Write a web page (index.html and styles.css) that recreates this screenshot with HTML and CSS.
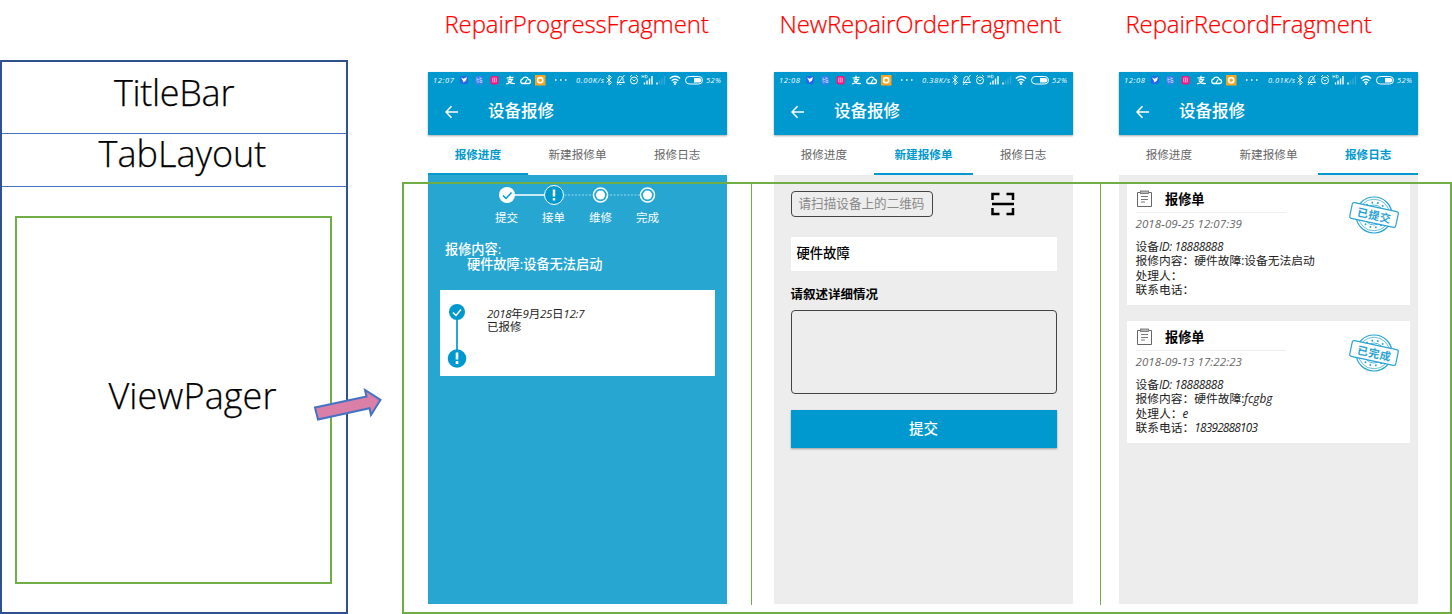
FILE: index.html
```
<!DOCTYPE html>
<html lang="zh-CN">
<head>
<meta charset="utf-8">
<title>Repair fragments</title>
<link rel="stylesheet" href="styles.css">
</head>
<body>
<svg class="defs" width="0" height="0">
  <defs>
    <symbol id="status" viewBox="0 0 299 16">
      <rect x="32" y="4" width="8" height="8" rx="2" fill="#2467e8"/>
      <path d="M33 5.500l2.500 1.200L39 5l-1 3.500-2.500 2-.7-2z" fill="#fff"/>
      <rect x="47.500" y="4" width="7.500" height="8.500" rx="1.500" fill="#3e7cf0"/>
      <path d="M49 5.500v4M49 7.500h2M52 5v3M52 6.500h2M52 8.500h2v2h-2zM49 10.500l2-1" stroke="#b8d3ff" stroke-width=".8" fill="none"/>
      <rect x="62.500" y="4" width="8" height="8.500" rx="2" fill="#f5167f"/>
      <path d="M64.500 6h4v4h-4zM64.500 8h4M66.500 6v4" stroke="#ff9ccd" stroke-width=".8" fill="none"/>
      <path d="M78.500 6l7-.7M82 3.800v3.500M79.500 8l5-.5q-2 3.500-6.500 4.500M80 9q2.500 3 7 2.500" stroke="#fff" stroke-width="1.200" fill="none"/>
      <path d="M94.500 11.500a2.300 2.300 0 0 1 0-4.500 3.200 3.200 0 0 1 6 .5 2 2 0 0 1 0 4zM97 11l2-3.500" stroke="#fff" stroke-width="1.300" fill="none"/>
      <rect x="107" y="3" width="10.500" height="10.500" fill="#faa51b"/>
      <circle cx="112.200" cy="8.200" r="2.600" fill="none" stroke="#fff" stroke-width="1.600"/>
      <path d="M127 8h1.500M132 8h1.500M137 8h1.500" stroke="#fff" stroke-width="1.300"/>
      <path d="M178.500 5.500l5 5-2.500 2.500v-10l2.500 2.500-5 5" stroke="#fff" fill="none" stroke-width=".9"/>
      <path d="M189 10.500h7.500l-1.500-2V6.500q-.5-2-2.500-2t-2.500 2v2zM191.500 12.500h2M189 13l7.500-10" stroke="#fff" fill="none" stroke-width=".9"/>
      <circle cx="206" cy="8.500" r="3.500" stroke="#fff" fill="none"/>
      <path d="M202 5l2-2M210 5l-2-2M204.500 7.500l1.500 1.500 1.500-1.500" stroke="#fff" fill="none" stroke-width=".9"/>
      <path d="M214 3v3M216 3v3M214 4.500h2M217.500 3v3q2 0 2-1.500t-2-1.500" stroke="#fff" stroke-width=".6" fill="none"/>
      <path d="M216.500 12.500V10.500M219 12.500V8.500M221.500 12.500V6.500M224 12.500V4" stroke="#fff" stroke-width="1.400"/>
      <path d="M229 12.500v-2" stroke="#fff" stroke-width="1.500"/>
      <path d="M231.500 12.500v-4M234 12.500v-6M236.500 12.500V4" stroke="#35a9d6" stroke-width="1.400"/>
      <path d="M241.800 6.500q5.200-4.500 10.400 0M243.600 8.700q3.400-3 6.800 0M245.200 10.700q1.800-1.500 3.600 0" stroke="#fff" stroke-width="1.300" fill="none"/>
      <circle cx="247" cy="12" r="1" fill="#fff"/>
      <rect x="257.500" y="4.500" width="17" height="7.500" rx="3.700" stroke="#fff" fill="none"/>
      <path d="M266 6h5.500a2.300 2.300 0 0 1 0 4.500H266z" fill="#fff"/>
    </symbol>
    <symbol id="back" viewBox="0 0 14 14"><path d="M13 7H1.500M6.500 1.200L1 7l5.500 5.800" stroke="#fff" stroke-width="1.600" fill="none"/></symbol>
    <symbol id="sheet" viewBox="0 0 17 18"><path d="M4 2.500H1.500v14h14v-14H13" stroke="#666" fill="none"/><rect x="4.500" y="1" width="8" height="2.500" fill="#bbb" stroke="#666" stroke-width=".8"/><path d="M5 6.500h7M5 9.500h7M5 12h4" stroke="#666" stroke-width=".9"/></symbol>
    <symbol id="stamp" viewBox="0 0 52 44">
      <g fill="none" stroke="#2aa4d2">
        <circle cx="26" cy="22" r="18" stroke-width="1.200"/>
        <circle cx="26" cy="22" r="15.800" stroke-width=".7"/>
        <circle cx="26" cy="22" r="12.500" stroke-width="1.800" stroke-dasharray="1.600 4"/>
        <circle cx="26" cy="22" r="10" stroke-width=".8"/>
      </g>
      <rect x="2.500" y="14" width="47" height="16" rx="2" fill="#fff" stroke="#2aa4d2" stroke-width="1.200" transform="rotate(12 26 22)"/>
    </symbol>
  </defs>
</svg>

<main class="page">
  <section class="structure">
    <div class="slot slot-title"><span>TitleBar</span></div>
    <div class="slot slot-tabs"><span>TabLayout</span></div>
    <div class="slot-pager"><div class="pager"><span>ViewPager</span></div></div>
  </section>

  <section class="fragment fragment-progress">
    <h2 class="name">RepairProgressFragment</h2>
    <div class="phone">
      <header class="appbar">
        <svg class="statusbar" width="299" height="16"><use href="#status"/><text x="5" y="10.500" textLength="21">12:07</text><text x="148" y="10.500" textLength="28">0.00K/s</text><text x="278" y="10.500" textLength="15">52%</text></svg>
        <div class="titlebar"><svg width="14" height="14"><use href="#back"/></svg><span>设备报修</span></div>
      </header>
      <nav class="tabs"><span class="tab active">报修进度</span><span class="tab">新建报修单</span><span class="tab">报修日志</span></nav>
      <div class="body progress">
        <svg class="steps" width="160" height="22">
          <path d="M10 10h47" stroke="#fff" stroke-width="1.600"/>
          <path d="M57 10h93" stroke="#9ad8ec" stroke-dasharray="2 1.500"/>
          <circle cx="10" cy="10" r="8" fill="#fff"/><path d="M6 10.500l3 3 5.500-6" stroke="#0099cf" stroke-width="1.500" fill="none"/>
          <circle cx="57" cy="10" r="9.500" fill="#0099cf" stroke="#fff"/><path d="M57 4.500v7M57 13v2.500" stroke="#fff" stroke-width="2.500"/>
          <circle cx="103.500" cy="10" r="7" fill="#27a6d2" stroke="#fff" stroke-width="1.500"/><circle cx="103.500" cy="10" r="4.500" fill="#fff"/>
          <circle cx="150.500" cy="10" r="7" fill="#27a6d2" stroke="#fff" stroke-width="1.500"/><circle cx="150.500" cy="10" r="4.500" fill="#fff"/>
        </svg>
        <div class="step-names"><span>提交</span><span>接单</span><span>维修</span><span>完成</span></div>
        <div class="content-text"><p>报修内容:</p><p class="indent">硬件故障:设备无法启动</p></div>
        <div class="timeline">
          <svg width="20" height="68">
            <path d="M10 10v48" stroke="#0099cf" stroke-width="1.700"/>
            <circle cx="10" cy="10" r="8" fill="#0099cf"/><path d="M6 10.500l3 3 5-6" stroke="#fff" stroke-width="1.500" fill="none"/>
            <circle cx="10" cy="56.500" r="9.300" fill="#0099cf"/><path d="M10 50.500v7M10 59v3" stroke="#fff" stroke-width="2.600"/>
          </svg>
          <div><p class="stamp-time"><i>2018</i>年<i>9</i>月<i>25</i>日<i>12:7</i></p><p>已报修</p></div>
        </div>
      </div>
    </div>
  </section>

  <section class="fragment fragment-order">
    <h2 class="name">NewRepairOrderFragment</h2>
    <div class="phone">
      <header class="appbar">
        <svg class="statusbar" width="299" height="16"><use href="#status"/><text x="5" y="10.500" textLength="21">12:08</text><text x="148" y="10.500" textLength="28">0.38K/s</text><text x="278" y="10.500" textLength="15">52%</text></svg>
        <div class="titlebar"><svg width="14" height="14"><use href="#back"/></svg><span>设备报修</span></div>
      </header>
      <nav class="tabs"><span class="tab">报修进度</span><span class="tab active">新建报修单</span><span class="tab">报修日志</span></nav>
      <div class="body order">
        <div class="scan-row">
          <div class="scan-input">请扫描设备上的二维码</div>
          <svg width="24" height="24"><path d="M1.500 8V2H8.500M15.500 2H22V8M1.500 16v6H8.500M15.500 22H22V16M1 12h22" fill="none" stroke="#000" stroke-width="2.500"/></svg>
        </div>
        <div class="kind">硬件故障</div>
        <div class="label">请叙述详细情况</div>
        <div class="details"></div>
        <div class="submit">提交</div>
      </div>
    </div>
  </section>

  <section class="fragment fragment-record">
    <h2 class="name">RepairRecordFragment</h2>
    <div class="phone">
      <header class="appbar">
        <svg class="statusbar" width="299" height="16"><use href="#status"/><text x="5" y="10.500" textLength="21">12:08</text><text x="149" y="10.500" textLength="27">0.01K/s</text><text x="278" y="10.500" textLength="15">52%</text></svg>
        <div class="titlebar"><svg width="14" height="14"><use href="#back"/></svg><span>设备报修</span></div>
      </header>
      <nav class="tabs"><span class="tab">报修进度</span><span class="tab">新建报修单</span><span class="tab active">报修日志</span></nav>
      <div class="body records">
        <article class="record">
          <div class="record-text">
            <div class="record-head"><svg width="17" height="18"><use href="#sheet"/></svg><span>报修单</span></div>
            <div class="date">2018-09-25 12:07:39</div>
            <p>设备<i class="device">ID: 18888888</i></p><p>报修内容：硬件故障:设备无法启动</p><p>处理人：</p><p>联系电话：</p>
          </div>
          <svg class="stamp" width="52" height="44"><use href="#stamp"/><text x="26" y="26.500" textLength="34" transform="rotate(12 26 22)">已提交</text></svg>
        </article>
        <article class="record">
          <div class="record-text">
            <div class="record-head"><svg width="17" height="18"><use href="#sheet"/></svg><span>报修单</span></div>
            <div class="date">2018-09-13 17:22:23</div>
            <p>设备<i class="device">ID: 18888888</i></p><p>报修内容：硬件故障:<i>fcgbg</i></p><p>处理人：<i>e</i></p><p>联系电话：<i class="tel">18392888103</i></p>
          </div>
          <svg class="stamp" width="52" height="44"><use href="#stamp"/><text x="26" y="26.500" textLength="34" transform="rotate(12 26 22)">已完成</text></svg>
        </article>
      </div>
    </div>
  </section>

  <div class="outline"><div></div><div></div><div></div></div>
  <svg class="arrow" width="70" height="36"><path d="M3 19.500L54.500 8.500 53 2 68.500 11.800 59 27 57.500 20.200 6 31.500z" fill="#d97fa8" stroke="#4472c4" stroke-width="2"/></svg>
</main>
</body>
</html>
```
FILE: styles.css
```
* { box-sizing: border-box; }
body { margin: 0; background: #fff; font-family: "Open Sans", "Noto Sans CJK SC", sans-serif; }
p, h2 { margin: 0; }
svg { display: block; flex: none; }
.defs { position: absolute; }
.page { position: relative; display: flex; width: 1452px; height: 614px; overflow: hidden; }

.structure { display: flex; flex-direction: column; width: 348px; height: 554px; margin-top: 60px; border: 2px solid #2f528f; font-weight: 300; font-size: 36px; line-height: 40px; color: #000; -webkit-text-stroke: .25px #000; }
.slot { display: flex; justify-content: center; border-bottom: 1px solid #4472c4; white-space: nowrap; }
.slot-title { height: 72px; padding: 11px 0 0 0; letter-spacing: -.3px; }
.slot-tabs { height: 53px; padding: 0 0 0 17px; }
.slot-pager { flex: 1; padding: 29px 14px 28px 13px; }
.pager { display: flex; align-items: center; justify-content: center; height: 100%; padding: 0 0 9px 38px; border: 2px solid #70ad47; letter-spacing: .1px; }

.fragment { width: 299px; flex: none; }
.fragment-progress { margin-left: 80px; }
.fragment-order { margin-left: 47px; }
.fragment-record { margin-left: 46px; }
.name { height: 72px; padding-top: 8px; font-size: 24px; line-height: 32px; font-weight: 300; letter-spacing: -.14px; color: #f00; white-space: nowrap; -webkit-text-stroke: .25px #f00; }
.fragment-progress .name { padding-left: 16.500px; }
.fragment-order .name { padding-left: 5.500px; }
.fragment-record .name { padding-left: 6.500px; }

.phone { display: flex; flex-direction: column; height: 532px; font-size: 12px; }
.appbar { position: relative; height: 63px; background: #0099cf; box-shadow: 0 1px 2px rgba(0,0,0,.35); }
.statusbar text { font-size: 7.500px; font-style: italic; font-weight: 500; fill: #fff; }
.titlebar { display: flex; align-items: center; height: 47px; padding: 0 0 0 17px; gap: 29px; color: #fff; }
.titlebar span { font-size: 16.500px; line-height: 24px; font-weight: 500; padding-bottom: 1px; }
.tabs { display: flex; height: 40px; background: #fff; }
.tab { flex: 1; display: flex; align-items: center; justify-content: center; border-bottom: 2px solid transparent; font-size: 11.600px; color: #666; }
.tab.active { color: #0099cf; font-weight: 700; border-color: #0099cf; }
.body { flex: 1; background: #ededed; }

.progress { background: #27a6d2; color: #fff; padding: 10px 12px 0; }
.steps { margin-left: 57px; }
.step-names { display: flex; width: 188px; margin: 2px 0 0 43px; line-height: 18px; font-size: 11.500px; }
.step-names span { width: 47px; text-align: center; }
.content-text { margin: 15px 0 0 5px; font-size: 13.200px; line-height: 15px; font-weight: 500; }
.indent { padding-left: 22px; }
.timeline { display: flex; gap: 20px; height: 86px; margin: 18px 0 0; padding: 12px 7px 0; background: #fff; color: #222; font-size: 11.500px; line-height: 13px; }
.timeline div { padding-top: 5px; }
.stamp-time { letter-spacing: -.25px; }

.order { padding: 16px 16.500px 0; }
.scan-row { display: flex; gap: 58.500px; align-items: center; height: 26px; }
.scan-input { width: 142px; height: 26px; padding-left: 7px; border: 1px solid #444; border-radius: 4px; font-size: 12.600px; line-height: 24px; color: #888; white-space: nowrap; }
.kind { height: 34px; margin-top: 20px; padding-left: 6px; background: #fff; font-size: 13.300px; line-height: 33px; font-weight: 500; }
.label { margin-top: 14px; font-size: 12.500px; line-height: 20px; font-weight: 700; }
.details { height: 84px; margin-top: 5px; border: 1px solid #444; border-radius: 4px; }
.submit { height: 38px; margin-top: 16px; background: #0099cf; color: #fff; font-size: 14.500px; line-height: 37px; font-weight: 500; text-align: center; box-shadow: 0 1px 2px rgba(0,0,0,.35); }

.records { display: flex; flex-direction: column; gap: 16px; padding: 8px 8px 0 8px; }
.record { display: flex; justify-content: space-between; height: 122px; padding: 7px 10px 0 8.500px; background: #fff; }
.record-text { width: 198px; font-size: 11.750px; line-height: 14.300px; color: #222; white-space: nowrap; }
.record-head { display: flex; align-items: center; gap: 12.500px; width: 150px; height: 23px; padding-bottom: 4px; border-bottom: 1px solid #eee; font-size: 13.200px; font-weight: 700; color: #000; }
.date { margin: 3px 0 8px; line-height: 15px; font-size: 11.500px; font-style: italic; letter-spacing: .1px; color: #666; }
.device { letter-spacing: -.4px; }
.tel { letter-spacing: -.75px; }
.stamp { margin-top: 3px; }
.stamp text { font-size: 11px; font-weight: 700; fill: #2aa4d2; text-anchor: middle; }

/* Frame drawn over all three phones, with one cell per fragment */
.outline { position: absolute; left: 402px; top: 182px; display: flex; width: 1050px; height: 432px; padding-bottom: 7px; border: 2px solid #70ad47; }
.outline div { width: 349px; border-right: 1px solid #70ad47; }
.outline div:first-child { width: 348px; }
.outline div:last-child { border: 0; }
.arrow { position: absolute; left: 312px; top: 388px; }
```
